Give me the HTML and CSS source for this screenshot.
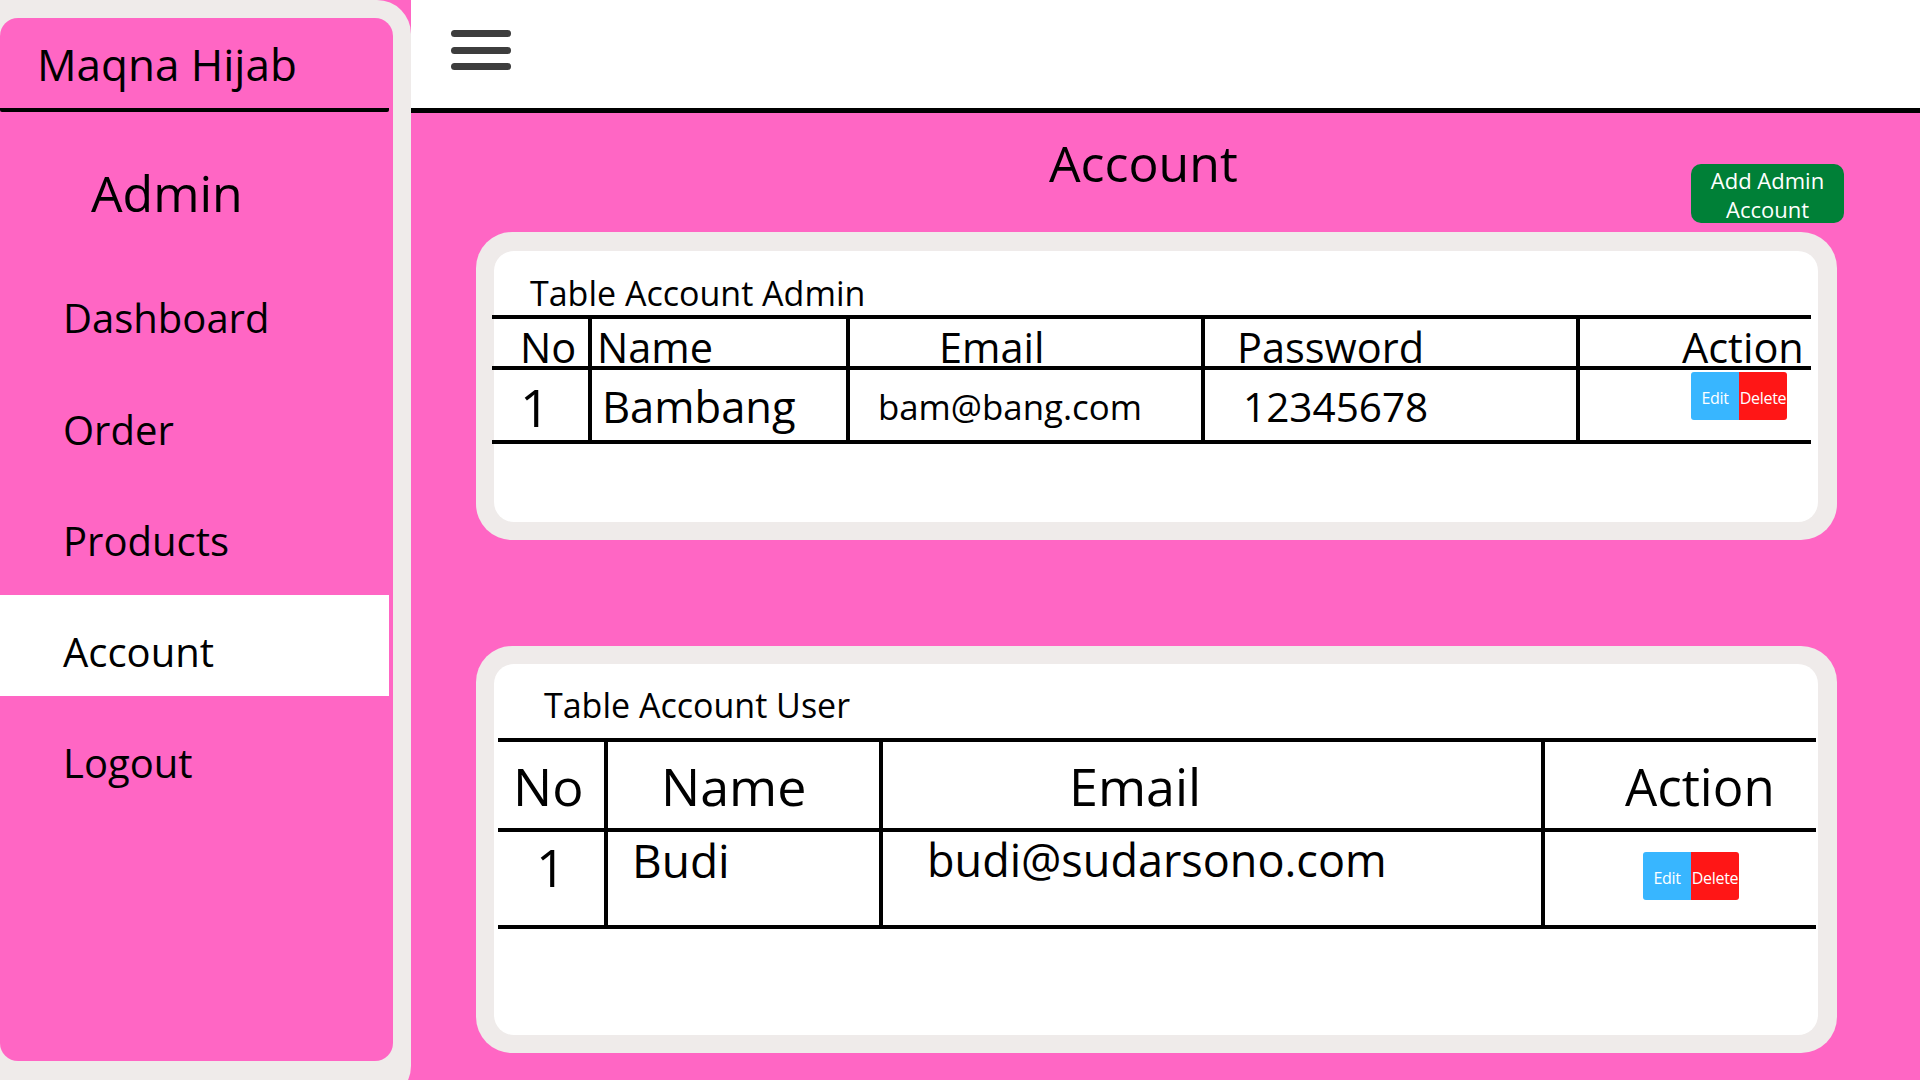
FILE: index.html
```html
<!DOCTYPE html>
<html lang="id">
<head>
<meta charset="utf-8">
<title>Maqna Hijab - Account</title>
<link rel="stylesheet" href="styles.css">
</head>
<body>
<div class="app">
  <aside class="sidebar">
    <div class="sidebar-inner">
      <div class="brand">Maqna Hijab</div>
      <div class="role">Admin</div>
      <nav class="nav">
        <a class="nav-item">Dashboard</a>
        <a class="nav-item">Order</a>
        <a class="nav-item">Products</a>
        <a class="nav-item active">Account</a>
        <a class="nav-item">Logout</a>
      </nav>
    </div>
  </aside>
  <main class="main">
    <header class="topbar">
      <div class="hamburger"><span></span><span></span><span></span></div>
    </header>
    <section class="content">
      <div class="title-row">
        <h1 class="page-title">Account</h1>
        <div class="add-btn">Add Admin<br>Account</div>
      </div>

      <div class="card card-admin">
        <div class="card-body">
          <div class="card-title title-admin">Table Account Admin</div>
          <div class="tbl tbl-admin">
            <div class="tr th">
              <div class="c">No</div>
              <div class="c">Name</div>
              <div class="c">Email</div>
              <div class="c">Password</div>
              <div class="c">Action</div>
            </div>
            <div class="tr td">
              <div class="c">1</div>
              <div class="c">Bambang</div>
              <div class="c">bam@bang.com</div>
              <div class="c">12345678</div>
              <div class="c"><div class="actions"><span class="btn-edit">Edit</span><span class="btn-del">Delete</span></div></div>
            </div>
          </div>
        </div>
      </div>

      <div class="card card-user">
        <div class="card-body">
          <div class="card-title title-user">Table Account User</div>
          <div class="tbl tbl-user">
            <div class="tr th">
              <div class="c">No</div>
              <div class="c">Name</div>
              <div class="c">Email</div>
              <div class="c">Action</div>
            </div>
            <div class="tr td">
              <div class="c">1</div>
              <div class="c">Budi</div>
              <div class="c">budi@sudarsono.com</div>
              <div class="c"><div class="actions"><span class="btn-edit">Edit</span><span class="btn-del">Delete</span></div></div>
            </div>
          </div>
        </div>
      </div>
    </section>
  </main>
</div>
</body>
</html>
```

FILE: styles.css
```css
* { box-sizing: border-box; }

html, body {
  margin: 0;
  padding: 0;
  width: 1920px;
  height: 1080px;
  overflow: hidden;
  background: #ff66c4;
  font-family: "Open Sans", "Noto Sans", sans-serif;
  color: #000;
}

.app {
  display: flex;
  width: 1920px;
  height: 1080px;
}

/* ---------- Sidebar ---------- */
.sidebar {
  flex: 0 0 411px;
  width: 411px;
  height: 1100px;
  background: #efebea;
  padding: 18px 18px 0 0;
  border-radius: 0 34px 34px 0;
}

.sidebar-inner {
  width: 393px;
  height: 1043px;
  background: #ff66c4;
  border-radius: 18px;
}

.brand {
  width: 389px;
  height: 94px;
  padding: 24px 0 0 37px;
  font-size: 44px;
  line-height: 44px;
  border-bottom: 4px solid #000;
  border-radius: 0 0 2px 2px;
}

.role {
  margin-top: 55.6px;
  padding-left: 91px;
  font-size: 50px;
  line-height: 50px;
}

.nav {
  margin-top: 43px;
  display: flex;
  flex-direction: column;
  gap: 10px;
}

.nav-item {
  display: block;
  width: 389px;
  height: 101px;
  padding: 37.5px 0 0 63px;
  font-size: 40px;
  line-height: 40px;
  color: #000;
}

.nav-item:first-child { margin-bottom: 1px; }

.nav-item.active {
  background: #ffffff;
}

/* ---------- Main ---------- */
.main {
  flex: 1 1 auto;
  display: flex;
  flex-direction: column;
}

.topbar {
  height: 113px;
  background: #ffffff;
  border-bottom: 5px solid #000;
  padding: 30px 0 0 40px;
}

.hamburger {
  width: 60px;
  display: flex;
  flex-direction: column;
  gap: 9.5px;
}

.hamburger span {
  display: block;
  height: 7px;
  border-radius: 4px;
  background: #3d3d3d;
}

.content {
  padding-left: 65px;
  width: 1433px;
}

.title-row {
  display: flex;
  align-items: flex-start;
  height: 119px;
}

.page-title {
  margin: 0 0 0 573px;
  padding-top: 24.6px;
  font-size: 50px;
  line-height: 50px;
  font-weight: 400;
}

.add-btn {
  margin: 51px 0 0 auto;
  width: 153px;
  height: 59px;
  padding-top: 2px;
  background: #008037;
  border-radius: 10px;
  color: #ffffff;
  font-size: 22px;
  line-height: 29px;
  text-align: center;
}

/* ---------- Cards ---------- */
.card {
  width: 1361px;
  background: #efebea;
  border-radius: 36px;
  padding: 19px 19px 18px 18px;
}

.card-admin {
  height: 308px;
}

.card-user {
  margin-top: 106px;
  height: 407px;
  padding-top: 18px;
}

.card-body {
  height: 100%;
  background: #ffffff;
  border-radius: 20px;
}

.card-title {
  font-size: 34px;
  line-height: 34px;
  height: 34px;
}

.card-admin .card-body { padding-top: 25px; }
.card-user .card-body { padding-top: 24px; }

.title-admin { padding-left: 36px; }
.title-user { padding-left: 50px; }

/* ---------- Tables ---------- */
.tbl {
  border-top: 4px solid #000;
}

.tr {
  display: grid;
  border-bottom: 4px solid #000;
}

.c {
  border-left: 4px solid #000;
  line-height: 1;
  white-space: nowrap;
}

.c:first-child { border-left: none; }

.tbl-admin {
  margin: 5px 0 0 -2px;
  width: 1319px;
}

.tbl-admin .tr { grid-template-columns: 96px 258px 355px 375px 235px; }
.tbl-admin .th { height: 51px; font-size: 41.5px; }
.tbl-admin .td { height: 74px; }

.tbl-admin .th .c { padding-top: 7.5px; }
.tbl-admin .th .c:nth-child(1) { padding-left: 28px; }
.tbl-admin .th .c:nth-child(2) { padding-left: 5px; }
.tbl-admin .th .c:nth-child(3) { padding-left: 89px; }
.tbl-admin .th .c:nth-child(4) { padding-left: 32px; }
.tbl-admin .th .c:nth-child(5) { padding-left: 102px; }

.tbl-admin .td .c:nth-child(1) { font-size: 52px; padding: 11px 0 0 28px; }
.tbl-admin .td .c:nth-child(2) { font-size: 43.5px; padding: 15px 0 0 10px; }
.tbl-admin .td .c:nth-child(3) { font-size: 34.8px; padding: 19.5px 0 0 28px; }
.tbl-admin .td .c:nth-child(4) { font-size: 40.5px; padding: 17px 0 0 38px; }
.tbl-admin .td .c:nth-child(5) { padding: 2px 0 0 111px; }

.tbl-user {
  margin: 16px 0 0 4px;
  width: 1318px;
}

.tbl-user .tr { grid-template-columns: 106px 275px 662px 275px; }
.tbl-user .th { height: 90px; font-size: 52px; }
.tbl-user .td { height: 97px; }

.tbl-user .th .c { padding-top: 18px; }
.tbl-user .th .c:nth-child(1) { padding-left: 15px; }
.tbl-user .th .c:nth-child(2) { padding-left: 53px; }
.tbl-user .th .c:nth-child(3) { padding-left: 186px; }
.tbl-user .th .c:nth-child(4) { padding-left: 80px; font-size: 51px; padding-top: 19px; }

.tbl-user .td .c:nth-child(1) { font-size: 52px; padding: 9px 0 0 38px; }
.tbl-user .td .c:nth-child(2) { font-size: 46px; padding: 5px 0 0 24px; }
.tbl-user .td .c:nth-child(3) { font-size: 45px; padding: 5px 0 0 44px; }
.tbl-user .td .c:nth-child(4) { padding: 20px 0 0 98px; }

/* ---------- Action buttons ---------- */
.actions {
  display: flex;
}

.btn-edit,
.btn-del {
  display: block;
  width: 48px;
  height: 48px;
  padding-top: 3px;
  font-size: 16px;
  line-height: 46px;
  color: #ffffff;
  text-align: center;
  letter-spacing: -0.3px;
}

.btn-edit {
  background: #38b6ff;
  border-radius: 3px 0 0 3px;
}

.btn-del {
  background: #ff1616;
  border-radius: 0 3px 3px 0;
}
```
